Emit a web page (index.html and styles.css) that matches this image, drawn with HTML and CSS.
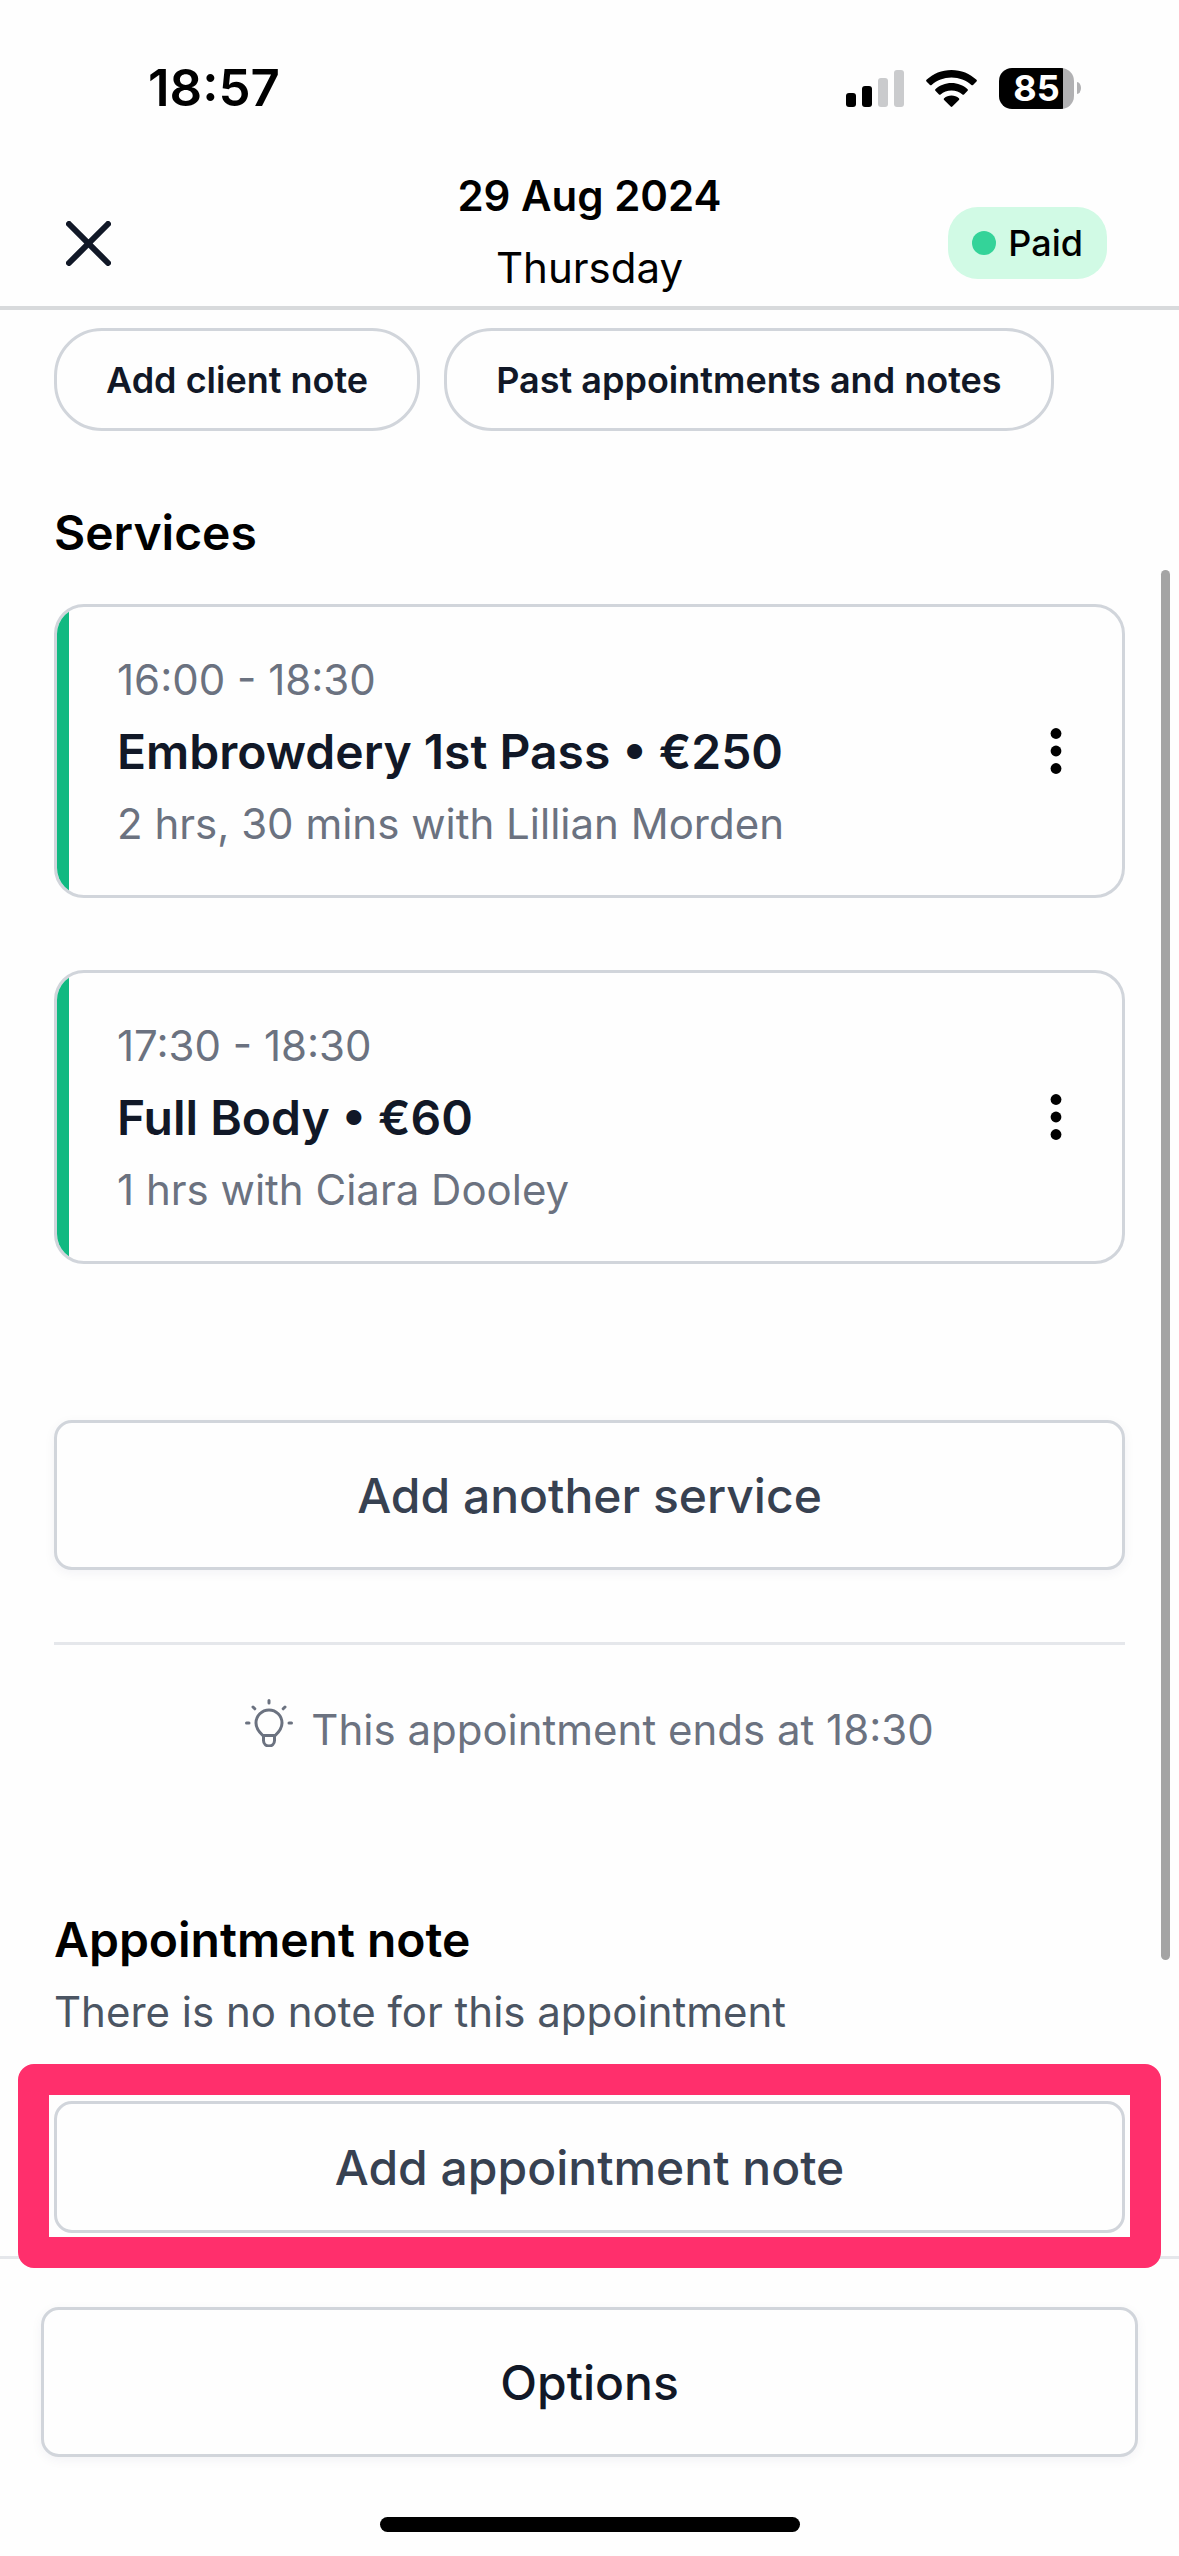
FILE: index.html
```html
<!DOCTYPE html>
<html lang="en">
<head>
  <meta charset="utf-8">
  <meta name="viewport" content="width=device-width, initial-scale=1">
  <title>Appointment – 29 Aug 2024</title>
  <link rel="stylesheet" href="styles.css">
</head>
<body class="screen">
  <div class="status-bar">
    <span class="status-time">18:57</span>
    <div class="status-icons">
      <svg class="status-signal" viewBox="0 0 58 37" width="58" height="37" aria-hidden="true">
        <rect x="0" y="23" width="10" height="14" rx="3"/>
        <rect x="16" y="16" width="10" height="21" rx="3"/>
        <rect class="status-signal-off" x="32" y="8" width="10" height="29" rx="3"/>
        <rect class="status-signal-off" x="48" y="0" width="10" height="37" rx="3"/>
      </svg>
      <svg class="status-wifi" viewBox="0 0 51 37" width="51" height="37" aria-hidden="true">
        <path d="M25.5 0C35.200 0 44 3.700 50.500 9.800Q51.300 10.600 50.500 11.400L47 15Q46.200 15.700 45.400 15C40.100 10.300 33.200 7.500 25.500 7.500S10.900 10.300 5.600 15Q4.800 15.700 4 15L.5 11.400Q-.3 10.600 .5 9.800C7 3.700 15.800 0 25.500 0Z"/>
        <path d="M25.500 13C31.700 13 37.300 15.300 41.600 19.200Q42.400 20 41.600 20.800L38 24.400Q37.200 25.100 36.400 24.400C33.500 21.900 29.700 20.400 25.500 20.400S17.500 21.900 14.600 24.400Q13.800 25.100 13 24.400L9.400 20.800Q8.600 20 9.400 19.200C13.700 15.300 19.300 13 25.500 13Z"/>
        <path d="M25.500 25.500C28.300 25.500 30.900 26.500 32.900 28.300Q33.700 29.100 32.900 29.900L26.300 36.500Q25.500 37.300 24.700 36.500L18.100 29.900Q17.300 29.100 18.100 28.300C20.100 26.500 22.700 25.500 25.500 25.500Z"/>
      </svg>
      <div class="battery">
        <span class="battery-body">85</span>
        <span class="battery-tip"></span>
      </div>
    </div>
  </div>

  <header class="header">
    <div class="header-side">
      <button class="icon-button" type="button" aria-label="Close">
        <svg class="close-icon" viewBox="0 0 45 45" width="45" height="45" aria-hidden="true">
          <path d="M3 3L42 42M42 3L3 42"/>
        </svg>
      </button>
    </div>
    <div class="header-title">
      <h1 class="header-date">29 Aug 2024</h1>
      <p class="header-day">Thursday</p>
    </div>
    <div class="header-side header-side-end">
      <span class="badge">Paid</span>
    </div>
  </header>

  <main class="content">
    <div class="chips">
      <button class="chip" type="button">Add client note</button>
      <button class="chip" type="button">Past appointments and notes</button>
    </div>

    <section class="services">
      <h2 class="section-title">Services</h2>
      <div class="service-list">
        <article class="service">
          <div class="service-text">
            <p class="service-meta">16:00 - 18:30</p>
            <h3 class="service-name">Embrowdery 1st Pass • €250</h3>
            <p class="service-meta">2 hrs, 30 mins with Lillian Morden</p>
          </div>
          <button class="icon-button" type="button" aria-label="Service menu">
            <svg viewBox="0 0 12 46" width="12" height="46" aria-hidden="true">
              <circle cx="6" cy="5.500" r="5.400"/><circle cx="6" cy="23" r="5.400"/><circle cx="6" cy="40.500" r="5.400"/>
            </svg>
          </button>
        </article>
        <article class="service">
          <div class="service-text">
            <p class="service-meta">17:30 - 18:30</p>
            <h3 class="service-name">Full Body • €60</h3>
            <p class="service-meta">1 hrs with Ciara Dooley</p>
          </div>
          <button class="icon-button" type="button" aria-label="Service menu">
            <svg viewBox="0 0 12 46" width="12" height="46" aria-hidden="true">
              <circle cx="6" cy="5.500" r="5.400"/><circle cx="6" cy="23" r="5.400"/><circle cx="6" cy="40.500" r="5.400"/>
            </svg>
          </button>
        </article>
      </div>
      <button class="button button-raised add-service" type="button">Add another service</button>
      <p class="hint">
        <svg class="hint-icon" viewBox="0 0 48 48" width="48" height="48" aria-hidden="true">
          <path d="M17.800 36.500C13.500 32.500 11 29 11 24A13 13 0 0 1 37 24C37 29 34.500 32.500 30.200 36.500ZM18.500 36.500V41.500A5.500 5.500 0 0 0 29.500 41.500V36.500M24 1.500V4M8 8L9.800 9.800M40 8L38.200 9.800M1.500 24H4M44 24H46.500"/>
        </svg>
        This appointment ends at 18:30
      </p>
    </section>

    <section class="note">
      <h2 class="section-title">Appointment note</h2>
      <p class="note-empty">There is no note for this appointment</p>
      <div class="highlight">
        <button class="button button-compact" type="button">Add appointment note</button>
      </div>
    </section>
    <div class="scroll-thumb"></div>
  </main>

  <footer class="footer">
    <button class="button button-raised button-dark" type="button">Options</button>
    <div class="home-indicator"></div>
  </footer>
</body>
</html>
```
FILE: styles.css
```css
*,
*::before,
*::after {
  box-sizing: border-box;
}

.screen {
  display: flex;
  flex-direction: column;
  min-height: 100vh;
  margin: 0;
  background: #fefefe;
  color: #000;
  font-family: Inter, "Liberation Sans", sans-serif;
  font-size: 42px;
  line-height: 72px;
}

h1,
h2,
h3,
p {
  margin: 0;
  font-size: inherit;
  font-weight: inherit;
}

button {
  font-family: inherit;
  cursor: pointer;
}

svg {
  display: block;
}

/* Status bar */
.status-bar {
  display: flex;
  align-items: center;
  justify-content: space-between;
  padding: 60px 98px 44px 148px;
}

.status-time {
  font-size: 51px;
  font-weight: 600;
  line-height: 56px;
}

.status-icons {
  display: flex;
  align-items: center;
  gap: 22px;
}

.status-signal-off {
  fill: #cacbcd;
}

.battery {
  display: flex;
  align-items: center;
  gap: 3px;
}

.battery-body {
  width: 75px;
  border-radius: 13px;
  background: linear-gradient(to right, #000 64px, #b1b1b3 64px);
  color: #fff;
  font-size: 36px;
  font-weight: 700;
  line-height: 41px;
  text-align: center;
}

.battery-tip {
  width: 4px;
  height: 12px;
  border-radius: 0 4px 4px 0 / 0 6px 6px 0;
  background: #b1b1b3;
}

/* Header */
.header {
  display: grid;
  grid-template-columns: 1fr auto 1fr;
  align-items: center;
  padding: 0 72px 2px;
  border-bottom: 4px solid #d8dadc;
}

.header-side {
  display: flex;
  margin-left: -6px;
  padding-top: 22px;
}

.header-side-end {
  justify-content: flex-end;
}

.header-title {
  text-align: center;
}

.header-date {
  font-weight: 600;
}

.icon-button {
  padding: 0;
  border: 0;
  background: none;
}

.close-icon {
  fill: none;
  stroke: #111827;
  stroke-width: 6;
  stroke-linecap: round;
}

.badge {
  display: flex;
  align-items: center;
  gap: 12px;
  padding: 0 24px;
  border-radius: 30px;
  background: #d1fae5;
  font-size: 36px;
  font-weight: 500;
}

.badge::before {
  width: 24px;
  height: 24px;
  border-radius: 50%;
  background: #34d399;
  content: "";
}

/* Content */
.content {
  position: relative;
  flex: 1;
  padding: 18px 54px 23px;
}

.chips {
  display: flex;
  gap: 24px;
}

.chip {
  padding: 19px 49px 18px;
  border: 3px solid #d1d5db;
  border-radius: 48px;
  background: none;
  color: #111827;
  font-size: 36px;
  font-weight: 600;
  line-height: 60px;
}

.section-title {
  font-size: 48px;
  font-weight: 600;
}

.services {
  padding-top: 66px;
}

.service-list {
  display: grid;
  gap: 72px;
  padding-top: 35px;
}

.service {
  position: relative;
  display: flex;
  align-items: center;
  justify-content: space-between;
  padding: 0 60px;
  border: 3px solid #d1d5db;
  border-radius: 30px;
  overflow: hidden;
}

.service::before {
  position: absolute;
  inset: 0 auto 0 0;
  width: 12px;
  background: #10b981;
  content: "";
}

.service-text {
  padding: 37px 0 35px;
}

.service-meta {
  color: #6b7280;
}

.service-name {
  color: #111827;
  font-size: 48px;
  font-weight: 600;
}

.button {
  display: block;
  width: 100%;
  padding: 37px 36px 35px;
  border: 3px solid #d1d5db;
  border-radius: 18px;
  background: #fefefe;
  color: #374151;
  font-size: 48px;
  font-weight: 500;
  line-height: 72px;
}

.button-raised {
  box-shadow: 0 3px 12px rgba(17, 24, 80, 0.05);
}

.button-compact {
  padding: 28px 36px 26px;
}

.button-dark {
  color: #111827;
}

.add-service {
  margin-top: 156px;
}

.hint {
  display: flex;
  justify-content: center;
  gap: 18px;
  margin-top: 72px;
  padding-top: 49px;
  border-top: 3px solid #e5e7eb;
  color: #6b7280;
}

.hint-icon {
  margin-top: 5px;
  fill: none;
  stroke: #6b7280;
  stroke-width: 3;
  stroke-linecap: round;
  stroke-linejoin: round;
}

.note {
  padding-top: 138px;
}

.note-empty {
  color: #4b5563;
}

.highlight {
  position: relative;
  margin-top: 53px;
}

/* Frame drawn around the button, over the footer line */
.highlight::before {
  position: absolute;
  z-index: 1;
  inset: -37px -36px -35px;
  border: 31px solid #ff2f6c;
  border-radius: 16px;
  pointer-events: none;
  content: "";
}

.scroll-thumb {
  position: absolute;
  top: 260px;
  right: 9px;
  width: 9px;
  height: 1390px;
  border-radius: 5px;
  background: #a4a4a4;
}

/* Footer */
.footer {
  padding: 48px 41px 24px;
  border-top: 3px solid #e5e7eb;
}

.home-indicator {
  width: 420px;
  height: 15px;
  margin: 60px auto 0;
  border-radius: 8px;
  background: #000;
}
```
